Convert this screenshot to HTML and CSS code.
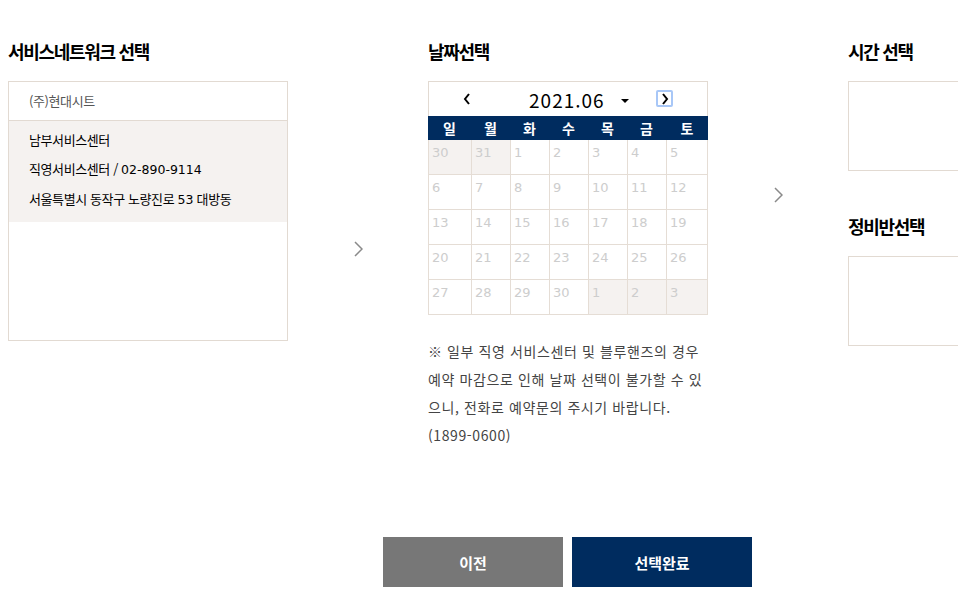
FILE: index.html
```html
<!DOCTYPE html>
<html lang="ko">
<head>
<meta charset="UTF-8">
<meta name="viewport" content="width=device-width, initial-scale=1.0">
<title>예약 선택</title>
<link rel="stylesheet" href="styles.css">
</head>
<body>
  <div class="wrap">
    <div class="steps">
      <!-- 서비스네트워크 -->
      <div class="col">
        <h2 class="col-title">서비스네트워크 선택</h2>
        <div class="network-box">
          <div class="company">(주)현대시트</div>
          <div class="center-info">
            <p>남부서비스센터</p>
            <p>직영서비스센터 / <span class="num">02-890-9114</span></p>
            <p>서울특별시 동작구 노량진로 <span class="num">53</span> 대방동</p>
          </div>
        </div>
      </div>

      <div class="step-arrow arrow-1">
        <svg width="9" height="16" viewBox="0 0 9 16"><polyline points="1,1 8,8 1,15" fill="none" stroke="#8a8a8a" stroke-width="1.5"/></svg>
      </div>

      <!-- 날짜 -->
      <div class="col">
        <h2 class="col-title">날짜선택</h2>
        <div class="calendar">
          <div class="cal-head">
            <span class="cal-nav prev">
              <svg width="8" height="12" viewBox="0 0 8 12"><polyline points="6,1 2,6 6,11" fill="none" stroke="#000" stroke-width="2"/></svg>
            </span>
            <span class="cal-month">2021.06 <span class="caret"></span></span>
            <span class="cal-nav next">
              <svg width="8" height="12" viewBox="0 0 8 12"><polyline points="2,1 6,6 2,11" fill="none" stroke="#000" stroke-width="2"/></svg>
            </span>
          </div>
          <div class="cal-week">
            <span>일</span><span>월</span><span>화</span><span>수</span><span>목</span><span>금</span><span>토</span>
          </div>
          <div class="cal-grid">
            <span class="other">30</span><span class="other">31</span><span>1</span><span>2</span><span>3</span><span>4</span><span>5</span>
            <span>6</span><span>7</span><span>8</span><span>9</span><span>10</span><span>11</span><span>12</span>
            <span>13</span><span>14</span><span>15</span><span>16</span><span>17</span><span>18</span><span>19</span>
            <span>20</span><span>21</span><span>22</span><span>23</span><span>24</span><span>25</span><span>26</span>
            <span>27</span><span>28</span><span>29</span><span>30</span><span class="other">1</span><span class="other">2</span><span class="other">3</span>
          </div>
        </div>
        <p class="cal-note">※ 일부 직영 서비스센터 및 블루핸즈의 경우 예약 마감으로 인해 날짜 선택이 불가할 수 있으니, 전화로 예약문의 주시기 바랍니다.<br>(1899-0600)</p>
      </div>

      <div class="step-arrow arrow-2">
        <svg width="9" height="16" viewBox="0 0 9 16"><polyline points="1,1 8,8 1,15" fill="none" stroke="#8a8a8a" stroke-width="1.5"/></svg>
      </div>

      <!-- 시간 / 정비반 -->
      <div class="col">
        <h2 class="col-title">시간 선택</h2>
        <div class="empty-box"></div>
        <h2 class="col-title second">정비반선택</h2>
        <div class="empty-box"></div>
      </div>
    </div>

    <div class="btn-row">
      <button class="btn btn-prev">이전</button>
      <button class="btn btn-done">선택완료</button>
    </div>
  </div>
</body>
</html>
```

FILE: styles.css
```css
body {
  margin: 0;
  font-family: "Noto Sans CJK KR", "Noto Sans", sans-serif;
  color: #111;
  overflow: hidden;
  background: #fff;
}
.wrap {
  width: 1119px;
  padding-left: 8px;
}
.steps {
  display: flex;
  align-items: flex-start;
}
.col {
  width: 280px;
  flex-shrink: 0;
  padding-top: 38px;
}
.col-title {
  margin: 0 0 17px;
  font-size: 18px;
  line-height: 26px;
  font-weight: 700;
  letter-spacing: -1.3px;
  color: #000;
}
.col-title.second {
  margin-top: 42px;
}
.step-arrow {
  width: 140px;
  flex-shrink: 0;
  display: flex;
  justify-content: center;
}
.arrow-1 { padding-top: 241px; }
.arrow-2 { padding-top: 187px; }

/* network list */
.network-box {
  height: 258px;
  border: 1px solid #e2dad2;
  font-size: 13px;
  letter-spacing: -0.4px;
}
.company {
  height: 38px;
  line-height: 38px;
  padding-left: 20px;
  color: #555;
  border-bottom: 1px solid #e2dad2;
}
.center-info {
  background: #f5f2f0;
  padding: 4px 0 8px 20px;
}
.center-info p {
  margin: 0;
  line-height: 29px;
  color: #000;
}
.num {
  font-family: "DejaVu Sans", sans-serif;
  font-size: 12.5px;
  letter-spacing: 0;
}

/* calendar */
.calendar {
  width: 280px;
}
.cal-head {
  height: 34px;
  border: 1px solid #e2dad2;
  border-bottom: none;
  position: relative;
  display: flex;
  align-items: center;
  justify-content: center;
}
.cal-month {
  font-size: 19px;
  letter-spacing: 1px;
  color: #000;
  margin-left: 22px;
}
.caret {
  display: inline-block;
  width: 0;
  height: 0;
  border-left: 4px solid transparent;
  border-right: 4px solid transparent;
  border-top: 4px solid #000;
  vertical-align: middle;
  margin-left: 10px;
  margin-top: -3px;
}
.cal-nav {
  position: absolute;
  top: 8px;
  width: 17px;
  height: 17px;
  display: flex;
  align-items: center;
  justify-content: center;
  box-sizing: border-box;
}
.cal-nav.prev { left: 29px; }
.cal-nav.next {
  left: 227px;
  border: 2px solid #a8c7f7;
  border-radius: 2px;
}
.cal-week {
  height: 24px;
  background: #002c5f;
  display: grid;
  grid-template-columns: 43px 39px 39px 39px 39px 39px 42px;
}
.cal-week span {
  color: #fff;
  font-size: 14px;
  font-weight: 700;
  text-align: center;
  line-height: 24px;
}
.cal-grid {
  display: grid;
  grid-template-columns: 42px 38px 38px 38px 38px 38px 40px;
  grid-auto-rows: 34px;
  gap: 1px;
  padding: 0 1px 1px;
  background: #e5ddd5;
}
.cal-grid span {
  background: #fff;
  color: #cdcdcd;
  font-family: "DejaVu Sans", sans-serif;
  font-size: 13px;
  padding: 5px 0 0 3px;
  line-height: 16px;
}
.cal-grid span.other {
  background: #f5f2f0;
}
.cal-note {
  margin: 22px 0 0;
  font-size: 14px;
  line-height: 28px;
  letter-spacing: 0.6px;
  color: #444;
}

/* time / team */
.empty-box {
  width: 280px;
  height: 88px;
  border: 1px solid #e2dad2;
}

/* buttons */
.btn-row {
  display: flex;
  justify-content: center;
  gap: 9px;
  margin-top: 88px;
}
.btn {
  width: 180px;
  height: 50px;
  border: none;
  color: #fff;
  font-family: "Noto Sans CJK KR", sans-serif;
  font-size: 15px;
  font-weight: 700;
  cursor: pointer;
}
.btn-prev { background: #777; }
.btn-done { background: #002c5f; }
```
